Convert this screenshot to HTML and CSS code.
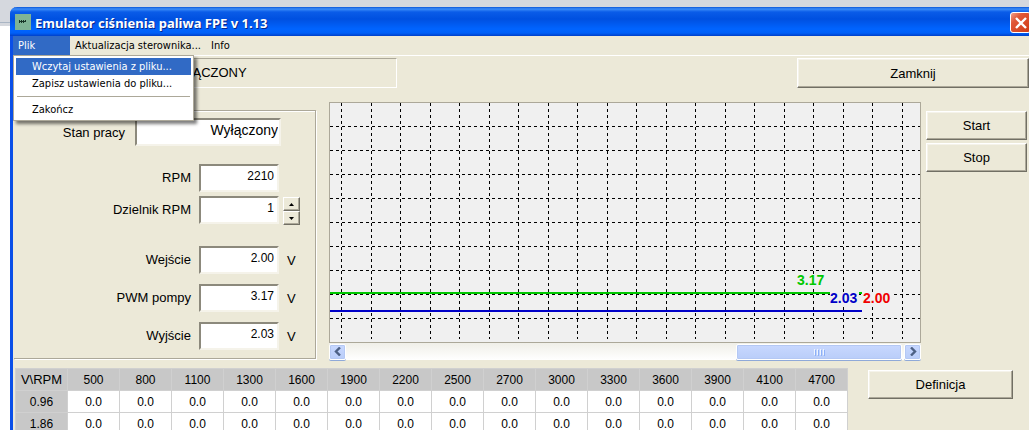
FILE: index.html
```
<!DOCTYPE html>
<html lang="pl">
<head>
<meta charset="utf-8">
<title>Emulator ciśnienia paliwa FPE v 1.13</title>
<link rel="stylesheet" href="styles.css">
</head>
<body>
<div class="window">
  <header class="titlebar">
    <svg class="app-icon" width="16" height="16" viewBox="0 0 16 16" aria-hidden="true"><rect width="16" height="16" fill="#7fb395"/><path d="M4.500 6v3M4 7.500h2M6.500 6v3M8.500 6v3M10.500 6v2M7 7.500h4" stroke="#173526" fill="none"/></svg>
    <h1 class="title">Emulator ciśnienia paliwa FPE v 1.13</h1>
    <button class="close" aria-label="Zamknij okno"><svg width="12" height="12" viewBox="0 0 12 12"><path d="M1 1l10 10M11 1L1 11" stroke="#fff" stroke-width="2.400"/></svg></button>
  </header>
  <nav class="menubar">
    <div class="menu-host">
      <button class="menu-item active">Plik</button>
      <div class="dropdown">
        <button class="option selected">Wczytaj ustawienia z pliku...</button>
        <button class="option">Zapisz ustawienia do pliku...</button>
        <hr class="separator">
        <button class="option">Zakończ</button>
      </div>
    </div>
    <button class="menu-item">Aktualizacja sterownika...</button>
    <button class="menu-item">Info</button>
  </nav>
  <main class="client">
    <div class="top-row">
      <div class="status">WYŁĄCZONY</div>
      <button class="button wide">Zamknij</button>
    </div>
    <div class="middle">
      <form class="panel">
        <div class="row state"><label for="state">Stan pracy</label><input id="state" value="Wyłączony" readonly></div>
        <div class="row group-start"><label for="rpm">RPM</label><input id="rpm" value="2210"></div>
        <div class="row close-row"><label for="div">Dzielnik RPM</label><input id="div" value="1">
          <span class="spinner">
            <button type="button" aria-label="Więcej"><svg width="5" height="3" viewBox="0 0 5 3"><path d="M0 3L2.500 0L5 3z"/></svg></button>
            <button type="button" aria-label="Mniej"><svg width="5" height="3" viewBox="0 0 5 3"><path d="M0 0L2.500 3L5 0z"/></svg></button>
          </span>
        </div>
        <div class="row volts-start"><label for="in">Wejście</label><input id="in" value="2.00"><span class="unit">V</span></div>
        <div class="row"><label for="pwm">PWM pompy</label><input id="pwm" value="3.17"><span class="unit">V</span></div>
        <div class="row"><label for="out">Wyjście</label><input id="out" value="2.03"><span class="unit">V</span></div>
      </form>
      <section class="chart-area">
        <svg class="chart" width="100%" height="239">
          <defs>
            <pattern id="rows" width="6" height="24" patternUnits="userSpaceOnUse"><rect y="23" width="3" height="1"/></pattern>
            <pattern id="cols" width="59" height="6" patternUnits="userSpaceOnUse"><rect x="11" width="1" height="3"/><rect x="41" width="1" height="3"/></pattern>
          </defs>
          <rect width="100%" height="236" fill="url(#rows)"/>
          <rect width="100%" height="236" fill="url(#cols)"/>
          <rect y="189" width="532" height="2" fill="#00c800"/>
          <rect y="207" width="532" height="2" fill="#0000c8"/>
          <rect x="467" y="171" width="30" height="14" fill="#f0f0f0"/>
          <rect x="500" y="189" width="29" height="14" fill="#f0f0f0"/>
          <rect x="533" y="189" width="29" height="14" fill="#f0f0f0"/>
          <text x="467" y="182" class="plot-label" fill="#00c800">3.17</text>
          <text x="500" y="200" class="plot-label" fill="#0000c8">2.03</text>
          <text x="533" y="200" class="plot-label" fill="#f00000">2.00</text>
        </svg>
        <div class="scrollbar">
          <button class="arrow" aria-label="W lewo"><svg width="8" height="9" viewBox="0 0 8 9"><path d="M6 .5L2 4.500L6 8.500"/></svg></button>
          <div class="track"><div class="thumb"><i></i><i></i><i></i><i></i></div></div>
          <button class="arrow" aria-label="W prawo"><svg width="8" height="9" viewBox="0 0 8 9"><path d="M2 .5L6 4.500L2 8.500"/></svg></button>
        </div>
      </section>
      <div class="side">
        <button class="button">Start</button>
        <button class="button">Stop</button>
      </div>
    </div>
    <div class="bottom">
      <table class="map">
        <thead><tr><th>V\RPM</th><th>500</th><th>800</th><th>1100</th><th>1300</th><th>1600</th><th>1900</th><th>2200</th><th>2500</th><th>2700</th><th>3000</th><th>3300</th><th>3600</th><th>3900</th><th>4100</th><th>4700</th></tr></thead>
        <tbody>
          <tr><th>0.96</th><td>0.0</td><td>0.0</td><td>0.0</td><td>0.0</td><td>0.0</td><td>0.0</td><td>0.0</td><td>0.0</td><td>0.0</td><td>0.0</td><td>0.0</td><td>0.0</td><td>0.0</td><td>0.0</td><td>0.0</td></tr>
          <tr><th>1.86</th><td>0.0</td><td>0.0</td><td>0.0</td><td>0.0</td><td>0.0</td><td>0.0</td><td>0.0</td><td>0.0</td><td>0.0</td><td>0.0</td><td>0.0</td><td>0.0</td><td>0.0</td><td>0.0</td><td>0.0</td></tr>
        </tbody>
      </table>
      <button class="button definition">Definicja</button>
    </div>
  </main>
</div>
</body>
</html>
```
FILE: styles.css
```
* { box-sizing: border-box; }
html { height: 100%; overflow: hidden; }
body {
  margin: 0;
  min-height: 100%;
  padding: 7px 0 0 10px;
  overflow: hidden;
  font: 13px "Liberation Sans", Arial, sans-serif;
  color: #000;
  background: linear-gradient(#d5d8de 22px, #a9b5c4 22px, #a9b5c4 23px, #d5d8de 23px, #d5d8de 26px, #fff 26px);
}
button, input { font: inherit; color: inherit; margin: 0; border-radius: 0; }
button { padding: 0; white-space: nowrap; }

.window {
  min-height: 423px;
  border-left: 3px solid #0a4fe8;
  border-top-left-radius: 7px;
  background: #ece9d8;
}
.titlebar {
  display: flex;
  align-items: center;
  height: 29px;
  margin-left: -3px;
  padding-left: 5px;
  border-top-left-radius: 7px;
  background: linear-gradient(#0a56d8 0, #3c8cf8 2px, #0a5ce8 5px, #0050e0 12px, #0064ff 22px, #0060f8 26px, #0040c8 29px);
}
.title {
  flex: 1;
  margin: 0 0 0 4px;
  padding-top: 3px;
  font: bold 13px/16px "Noto Sans", "Open Sans", sans-serif;
  color: #fff;
  text-shadow: 1px 1px 0 #08288c;
}
.close {
  display: flex;
  align-items: center;
  justify-content: center;
  flex: none;
  width: 21px;
  height: 21px;
  margin: 2px -2px 0 0;
  border: 1px solid #fff;
  border-radius: 3px;
  background: linear-gradient(135deg, #f0a08c, #e05838 30%, #d03c14);
}

.menubar {
  display: flex;
  height: 20px;
  border-bottom: 1px solid #fff;
  font: 11px "DejaVu Sans Condensed", Tahoma, sans-serif;
}
.menu-host { position: relative; }
.menu-item { height: 19px; border: 0; padding: 0 5px; background: none; }
.menu-item.active { width: 57px; text-align: left; color: #fff; background: #316ac5; }
.dropdown {
  position: absolute;
  z-index: 2;
  top: 19px;
  left: 0;
  width: 181px;
  padding: 2px;
  border: 1px solid #aca899;
  background: #fff;
  box-shadow: 3px 3px 3px rgba(0, 0, 0, .5);
}
.option { display: block; width: 100%; height: 17px; padding: 0 16px; border: 0; text-align: left; background: none; }
.option.selected { color: #fff; background: #316ac5; }
.separator { height: 1px; margin: 4px 1px; border: 0; background: #aca899; }

.client { display: flex; flex-direction: column; padding: 2px 0 0 1px; }
.top-row { display: flex; justify-content: space-between; }
.status {
  width: 383px;
  height: 30px;
  border: 1px solid;
  border-color: #aca899 #fff #fff #aca899;
  line-height: 28px;
  text-align: center;
}
.button {
  height: 29px;
  border: 1px solid;
  border-color: #fff #716f64 #716f64 #fff;
  background: #ece9d8;
  box-shadow: inset -1px -1px #aca899, inset 1px 1px #f5f3ea;
}
.wide { width: 232px; height: 30px; }

.middle { display: flex; align-items: flex-start; padding-top: 14px; }
.panel {
  width: 302px;
  margin: 8px 13px 0 0;
  padding: 7px 0 8px;
  border: 1px solid #aca899;
  border-left: 0;
  box-shadow: inset 0 1px #fff, 1px 1px #fff;
}
.row { display: flex; align-items: center; height: 28px; margin-top: 10px; }
.row label { width: 185px; padding: 0 8px 2px 0; text-align: right; }
.row input {
  width: 80px;
  height: 28px;
  padding: 0 3px 4px;
  border: 2px solid;
  border-color: #8c897c #f5f3ea #f5f3ea #8c897c;
  background: #fff;
  font-size: 12px;
  text-align: right;
}
.row.state { margin-top: 0; }
.row.state label { width: 121px; padding: 0 10px 0 0; }
.row.state input { width: 146px; padding-right: 1px; font-size: 14px; }
.row.group-start { margin-top: 18px; }
.row.close-row { margin-top: 4px; }
.row.volts-start { margin-top: 22px; }
.unit { margin-left: 8px; }
.spinner { display: flex; flex-direction: column; margin-left: 4px; padding-top: 2px; }
.spinner button {
  display: flex;
  align-items: center;
  justify-content: center;
  width: 17px;
  height: 14px;
  border: 1px solid;
  border-color: #fff #716f64 #716f64 #fff;
  background: #ece9d8;
  box-shadow: inset -1px -1px #aca899;
}

.chart-area { flex: 1; min-width: 0; }
.chart { display: block; box-sizing: content-box; width: calc(100% - 2px); border: 1px solid #aca899; background: #f0f0f0; }
.plot-label { font: bold 14px "Liberation Sans", Arial, sans-serif; }
.scrollbar { display: flex; align-items: center; height: 17px; background: linear-gradient(#f0efe8, #fff); }
.arrow, .thumb {
  border: 1px solid #fff;
  border-radius: 2px;
  background: linear-gradient(#c8d8ff, #b9cdf9);
  box-shadow: 0 0 0 1px #b4c8f4 inset, 0 1px #8fa9d8;
}
.arrow { display: flex; align-items: center; justify-content: center; width: 17px; height: 16px; }
.arrow path { fill: none; stroke: #4d6185; stroke-width: 2.4; }
.track { display: flex; flex: 1; justify-content: flex-end; padding-right: 2px; }
.thumb { display: flex; align-items: center; justify-content: center; gap: 2px; width: 166px; height: 16px; }
.thumb i { width: 1px; height: 6px; background: #eef4fe; box-shadow: 1px 1px #8cb0f8; }
.side { display: flex; flex-direction: column; gap: 3px; width: 108px; padding: 9px 2px 0 5px; }

.bottom { display: flex; align-items: flex-start; padding: 8px 16px 0 1px; }
.map { flex: 1; width: 100%; table-layout: fixed; border-collapse: collapse; font-size: 12px; text-align: center; }
.map th, .map td { height: 22px; padding: 0; border: 1px solid #d0d0d0; font-weight: normal; background: #fff; }
.map th { background: #c8c8c8; }
.map thead th:first-child { font-size: 13px; }
.definition { flex: none; width: 145px; margin: 2px 0 0 20px; }
```
